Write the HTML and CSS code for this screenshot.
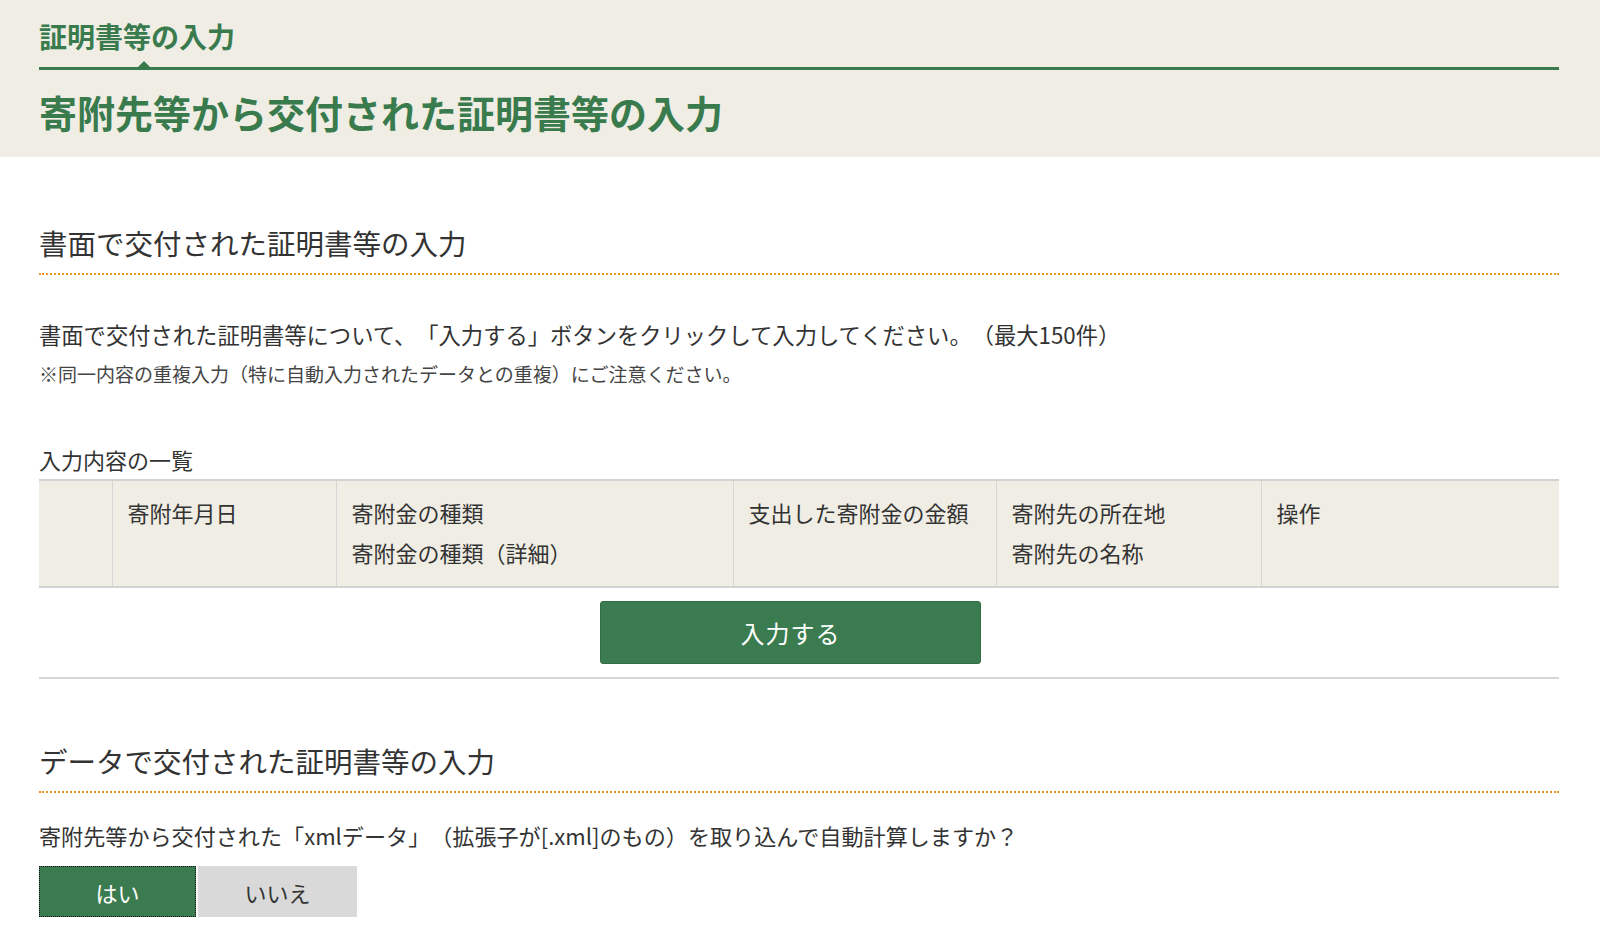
FILE: index.html
```html
<!DOCTYPE html>
<html lang="ja">

<head>
    <meta charset="UTF-8">
    <meta name="viewport" content="width=device-width, initial-scale=1.0">
    <title>寄附先等から交付された証明書等の入力</title>
    <link rel="stylesheet" href="styles.css">
</head>

<body>
    <header class="page-head">
        <div class="wrap">
            <p class="step-title">証明書等の入力</p>
            <h1 class="page-title">寄附先等から交付された証明書等の入力</h1>
        </div>
    </header>

    <main class="wrap">
        <section class="block">
            <h2 class="block-title">書面で交付された証明書等の入力</h2>
            <p class="lead">書面で交付された証明書等について、「入力する」ボタンをクリックして入力してください。（最大150件）</p>
            <p class="note">※同一内容の重複入力（特に自動入力されたデータとの重複）にご注意ください。</p>

            <p class="list-caption">入力内容の一覧</p>
            <table class="list">
                <thead>
                    <tr>
                        <th class="col-no"></th>
                        <th class="col-date">寄附年月日</th>
                        <th class="col-kind">寄附金の種類<br>寄附金の種類（詳細）</th>
                        <th class="col-amount">支出した寄附金の金額</th>
                        <th class="col-place">寄附先の所在地<br>寄附先の名称</th>
                        <th class="col-op">操作</th>
                    </tr>
                </thead>
            </table>
            <div class="add-row">
                <button type="button" class="btn-add">入力する</button>
            </div>
        </section>

        <section class="block block-data">
            <h2 class="block-title">データで交付された証明書等の入力</h2>
            <p class="question">寄附先等から交付された「xmlデータ」（拡張子が[.xml]のもの）を取り込んで自動計算しますか？</p>
            <div class="choice">
                <button type="button" class="choice-btn is-on">はい</button>
                <button type="button" class="choice-btn">いいえ</button>
            </div>
        </section>
    </main>
</body>

</html>
```

FILE: styles.css
```css
body {
    margin: 0;
    font-family: "Noto Sans CJK JP", "Noto Sans", sans-serif;
    color: #333;
    background: #fff;
    text-spacing-trim: space-all;
}

p, h1, h2 {
    margin: 0;
}

.wrap {
    margin: 0 41px 0 39px;
}

/* header band */
.page-head {
    background: #f0ede5;
    padding: 15px 0 19px;
}

.step-title {
    position: relative;
    font-size: 28px;
    font-weight: 700;
    line-height: 42px;
    color: #3a7b4e;
    padding-bottom: 10px;
    border-bottom: 3px solid #3a7b4e;
}

.step-title::after {
    content: "";
    position: absolute;
    left: 99px;
    bottom: 0;
    border-left: 6px solid transparent;
    border-right: 6px solid transparent;
    border-bottom: 6px solid #3a7b4e;
}

.page-title {
    margin-top: 15px;
    font-size: 38px;
    font-weight: 700;
    line-height: 53px;
    color: #3a7b4e;
}

/* sections */
.block {
    padding-top: 65px;
}

.block-data {
    padding-top: 61px;
}

.block-title {
    font-size: 28.5px;
    font-weight: 400;
    line-height: 42px;
    padding-bottom: 9px;
    border-bottom: 2px dotted #ea9224;
    color: #333;
}

.lead {
    margin-top: 41px;
    font-size: 22.3px;
    line-height: 36px;
}

.note {
    margin-top: 4px;
    font-size: 19px;
    line-height: 36px;
    color: #444;
}

.list-caption {
    margin-top: 49px;
    font-size: 22px;
    line-height: 36px;
}

/* list table */
.list {
    width: 100%;
    margin-top: 2px;
    border-collapse: collapse;
    border-top: 2px solid #d3d3d3;
    border-bottom: 2px solid #d3d3d3;
    background: #f0ede5;
}

.list th {
    text-align: left;
    vertical-align: top;
    font-size: 22px;
    font-weight: 400;
    line-height: 40px;
    padding: 11px 15px 14px;
    border-left: 1px solid #d6d6d6;
    color: #333;
}

.list th:first-child {
    border-left: 0;
}

.col-no { width: 73px; box-sizing: border-box; }
.col-date { width: 224px; box-sizing: border-box; }
.col-kind { width: 397px; box-sizing: border-box; }
.col-amount { width: 263px; box-sizing: border-box; }
.col-place { width: 265px; box-sizing: border-box; }

.add-row {
    display: flex;
    justify-content: center;
    padding: 13px 17px 13px 0;
    border-bottom: 2px solid #d6d6d6;
}

.btn-add {
    width: 381px;
    height: 63px;
    background: #3b7b50;
    border: 1px solid #336d46;
    border-radius: 3px;
    color: #fff;
    font-family: inherit;
    font-size: 24px;
    letter-spacing: 1px;
}

/* xml choice */
.question {
    margin-top: 24px;
    font-size: 22.1px;
    line-height: 36px;
}

.choice {
    display: flex;
    gap: 2px;
    margin-top: 13px;
}

.choice-btn {
    width: 159px;
    height: 51px;
    background: #d9d9d9;
    border: 0;
    color: #333;
    font-family: inherit;
    font-size: 22px;
}

.choice-btn.is-on {
    width: 157px;
    background: #3b7b50;
    border: 1px dotted #111;
    color: #fff;
}
```
